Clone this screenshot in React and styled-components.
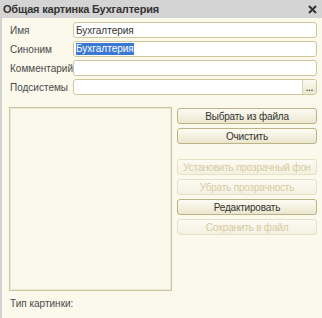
import React from "react";
import styled, { createGlobalStyle } from "styled-components";

const GlobalStyle = createGlobalStyle`
  body {
    margin: 0;
    font-family: "Liberation Sans", Arial, sans-serif;
    font-size: 10px;
    color: #4a4a4a;
  }
`;

const fields = [
  { label: "Имя", value: "Бухгалтерия" },
  { label: "Синоним", value: "Бухгалтерия", selected: true },
  { label: "Комментарий", value: "" },
  { label: "Подсистемы", value: "", choice: true },
];

const actions = [
  { title: "Выбрать из файла" },
  { title: "Очистить", gapAfter: true },
  { title: "Установить прозрачный фон", disabled: true },
  { title: "Убрать прозрачность", disabled: true },
  { title: "Редактировать" },
  { title: "Сохранить в файл", disabled: true },
];

export default function App() {
  return (
    <>
      <GlobalStyle />
      <Window>
        <TitleBar>
          <Title>Общая картинка Бухгалтерия</Title>
          <CloseIcon width="9" height="9" viewBox="0 0 9 9">
            <path d="M1 1 L8 8 M8 1 L1 8" stroke="#333" strokeWidth="2" />
          </CloseIcon>
        </TitleBar>
        <Body>
          <Fields>
            {fields.map((f) => (
              <React.Fragment key={f.label}>
                <Label>{f.label}</Label>
                <Input>
                  {f.selected ? <Selected>{f.value}</Selected> : f.value}
                  {f.choice && <ChoiceButton>...</ChoiceButton>}
                </Input>
              </React.Fragment>
            ))}
          </Fields>
          <Main>
            <Picture />
            <Buttons>
              {actions.map((a) => (
                <Button key={a.title} disabled={a.disabled} $gapAfter={a.gapAfter}>
                  {a.title}
                </Button>
              ))}
            </Buttons>
          </Main>
          <Footer>Тип картинки:</Footer>
        </Body>
      </Window>
    </>
  );
}

const Window = styled.div`
  width: 322px;
  height: 318px;
  display: flex;
  flex-direction: column;
  background: #fbf9ec;
  overflow: hidden;
`;

const TitleBar = styled.div`
  height: 18px;
  flex: none;
  display: flex;
  align-items: center;
  justify-content: space-between;
  padding: 0 5px 0 3px;
  background: #d4d4d4;
`;

const Title = styled.div`
  font-weight: bold;
  font-size: 11px;
  letter-spacing: -0.2px;
  color: #333;
`;

const CloseIcon = styled.svg`
  display: block;
`;

const Body = styled.div`
  flex: 1;
  display: flex;
  flex-direction: column;
  border-left: 2px solid #d2d2d2;
  padding: 4px 5px 0 7px;
`;

const Fields = styled.div`
  display: grid;
  grid-template-columns: 64px 1fr;
  row-gap: 3px;
  align-items: center;
`;

const Label = styled.div`
  padding-left: 1px;
  color: #4a4a4a;
  white-space: nowrap;
`;

const Input = styled.div`
  height: 16px;
  box-sizing: border-box;
  display: flex;
  align-items: center;
  background: #fff;
  border: 1px solid #cfc79e;
  border-radius: 3px;
  padding-left: 2px;
  color: #333;
  overflow: hidden;
`;

const Selected = styled.span`
  background: #3b78d4;
  color: #fff;
  line-height: 12px;
`;

const ChoiceButton = styled.div`
  margin-left: auto;
  width: 13px;
  height: 100%;
  border-left: 1px solid #d8d2b0;
  background: linear-gradient(#fbfaf2, #ece7cf);
  color: #555;
  font-size: 9px;
  font-weight: bold;
  display: flex;
  align-items: flex-end;
  justify-content: center;
  line-height: 11px;
`;

const Main = styled.div`
  display: grid;
  grid-template-columns: 163px 1fr;
  column-gap: 5px;
  margin-top: 12px;
`;

const Picture = styled.div`
  height: 184px;
  box-sizing: border-box;
  border: 1px solid #cbc69f;
  box-shadow: inset 0 0 0 1px #ece8d3;
  background: #fbf9ec;
`;

const Buttons = styled.div`
  display: flex;
  flex-direction: column;
  gap: 4px;
  padding-top: 1px;
`;

const Button = styled.button`
  height: 16px;
  padding: 0;
  white-space: nowrap;
  font-family: "Liberation Sans", Arial, sans-serif;
  font-size: 10px;
  letter-spacing: -0.2px;
  color: ${(p) => (p.disabled ? "#d6caa2" : "#333")};
  background: ${(p) =>
    p.disabled
      ? "linear-gradient(#fcfbf3, #f4f1e2)"
      : "linear-gradient(#fdfcf5, #ebe6cd)"};
  border: 1px solid ${(p) => (p.disabled ? "#e6e0c4" : "#bdb386")};
  border-radius: 3px;
  margin-bottom: ${(p) => (p.$gapAfter ? "11px" : "0")};
`;

const Footer = styled.div`
  margin-top: 7px;
  padding-left: 1px;
  color: #4a4a4a;
`;
